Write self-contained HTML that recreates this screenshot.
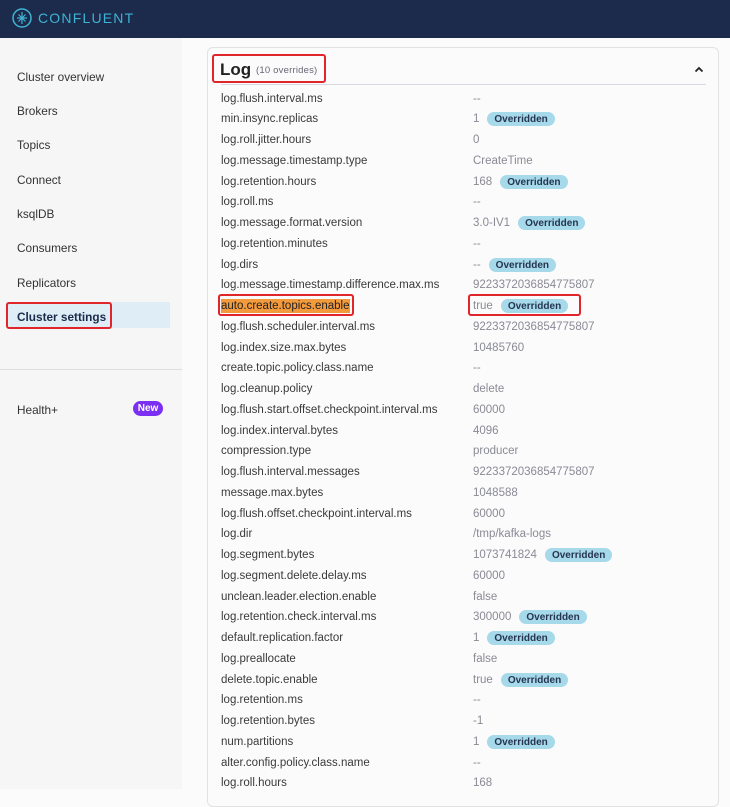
<!DOCTYPE html>
<html><head><meta charset="utf-8"><style>
*{margin:0;padding:0;box-sizing:border-box}
body{width:730px;height:789px;overflow:hidden;background:#fbfbfb;font-family:"Liberation Sans",sans-serif;position:relative}
.hdr{position:absolute;left:0;top:0;width:730px;height:38px;background:#1c2b4b}
.logo{position:absolute;left:12px;top:8px}
.brand{position:absolute;left:38px;top:10px;color:#3fb3d3;font-size:14px;letter-spacing:1.2px}
.side{position:absolute;left:0;top:38px;width:182px;height:751px;background:#f6f6f6}
.nav{position:absolute;left:17px;font-size:11.8px;color:#333}
.sel{position:absolute;left:6px;top:302px;width:164px;height:26px;background:#dfeef6}
.selbox{position:absolute;left:6px;top:302px;width:106px;height:27px;border:2px solid #e0262a;border-radius:3px}
.hr{position:absolute;left:0;top:369px;width:182px;height:1px;background:#ddd}
.new{position:absolute;left:133px;top:401px;width:30px;height:15px;border-radius:8px;background:#7b2ff2;color:#fff;font-size:10px;font-weight:bold;text-align:center;line-height:15px}
.card{position:absolute;left:207px;top:47px;width:512px;height:760px;border:1px solid #e2e2e2;border-radius:6px;background:#fbfbfb}
.title{position:absolute;left:220px;top:60px;font-size:17px;font-weight:bold;color:#222}
.ov{position:absolute;left:256px;top:65px;font-size:9.5px;color:#667;letter-spacing:.2px}
.tbox{position:absolute;left:212px;top:54px;width:114px;height:29px;border:2px solid #e0262a;border-radius:3px}
.div{position:absolute;left:221px;top:84px;width:485px;height:1px;background:#d8d8e0}
.r{position:absolute;left:221px;font-size:11.5px;color:#3a3a3a;white-space:nowrap;line-height:14px}
.v{position:absolute;left:473px;font-size:11.5px;color:#8a8a96;white-space:nowrap;height:14px;display:flex;align-items:center}
.b{display:inline-block;margin-left:8px;background:#a6d9ea;color:#26354f;font-weight:bold;font-size:10px;line-height:13px;padding:1px 7px 0;border-radius:8px}
.hl{background:#f39a3c;color:#222}
.box2{position:absolute;left:218px;top:294px;width:136px;height:22px;border:2px solid #e0262a;border-radius:3px}
.box3{position:absolute;left:468px;top:294px;width:113px;height:22px;border:2px solid #e0262a;border-radius:3px}
</style></head><body>
<div class="hdr">
<svg class="logo" width="20" height="20" viewBox="0 0 20 20"><circle cx="10" cy="10" r="9" fill="none" stroke="#3fb3d3" stroke-width="1.5"/><path d="M10 4v12M5 10h10M6.5 6.5l7 7M13.5 6.5l-7 7" stroke="#3fb3d3" stroke-width="1.2"/></svg>
<div class="brand">CONFLUENT</div>
</div>
<div class="side"></div>
<div class="nav" style="top:70px">Cluster overview</div>
<div class="nav" style="top:104px">Brokers</div>
<div class="nav" style="top:138px">Topics</div>
<div class="nav" style="top:173px">Connect</div>
<div class="nav" style="top:207px">ksqlDB</div>
<div class="nav" style="top:241px">Consumers</div>
<div class="nav" style="top:276px">Replicators</div>
<div class="sel"></div>
<div class="nav" style="top:310px;font-weight:bold;color:#1c2b4b">Cluster settings</div>
<div class="selbox"></div>
<div class="hr"></div>
<div class="nav" style="top:403px">Health+</div>
<div class="new">New</div>
<div class="card"></div>
<div class="title">Log</div><div class="ov">(10 overrides)</div><div class="tbox"></div>
<svg style="position:absolute;left:694px;top:66px" width="10" height="7" viewBox="0 0 10 7"><path d="M1.5 5.5L5 2l3.5 3.5" fill="none" stroke="#222" stroke-width="1.8"/></svg>
<div class="div"></div>
<div class="r" style="top:92px">log.flush.interval.ms</div><div class="v" style="top:92px">--</div>
<div class="r" style="top:112px">min.insync.replicas</div><div class="v" style="top:112px">1<span class="b">Overridden</span></div>
<div class="r" style="top:133px">log.roll.jitter.hours</div><div class="v" style="top:133px">0</div>
<div class="r" style="top:154px">log.message.timestamp.type</div><div class="v" style="top:154px">CreateTime</div>
<div class="r" style="top:175px">log.retention.hours</div><div class="v" style="top:175px">168<span class="b">Overridden</span></div>
<div class="r" style="top:195px">log.roll.ms</div><div class="v" style="top:195px">--</div>
<div class="r" style="top:216px">log.message.format.version</div><div class="v" style="top:216px">3.0-IV1<span class="b">Overridden</span></div>
<div class="r" style="top:237px">log.retention.minutes</div><div class="v" style="top:237px">--</div>
<div class="r" style="top:258px">log.dirs</div><div class="v" style="top:258px">--<span class="b">Overridden</span></div>
<div class="r" style="top:278px">log.message.timestamp.difference.max.ms</div><div class="v" style="top:278px">9223372036854775807</div>
<div class="r hl" style="top:299px">auto.create.topics.enable</div><div class="v" style="top:299px">true<span class="b">Overridden</span></div>
<div class="box2"></div><div class="box3"></div>
<div class="r" style="top:320px">log.flush.scheduler.interval.ms</div><div class="v" style="top:320px">9223372036854775807</div>
<div class="r" style="top:341px">log.index.size.max.bytes</div><div class="v" style="top:341px">10485760</div>
<div class="r" style="top:361px">create.topic.policy.class.name</div><div class="v" style="top:361px">--</div>
<div class="r" style="top:382px">log.cleanup.policy</div><div class="v" style="top:382px">delete</div>
<div class="r" style="top:403px">log.flush.start.offset.checkpoint.interval.ms</div><div class="v" style="top:403px">60000</div>
<div class="r" style="top:424px">log.index.interval.bytes</div><div class="v" style="top:424px">4096</div>
<div class="r" style="top:444px">compression.type</div><div class="v" style="top:444px">producer</div>
<div class="r" style="top:465px">log.flush.interval.messages</div><div class="v" style="top:465px">9223372036854775807</div>
<div class="r" style="top:486px">message.max.bytes</div><div class="v" style="top:486px">1048588</div>
<div class="r" style="top:507px">log.flush.offset.checkpoint.interval.ms</div><div class="v" style="top:507px">60000</div>
<div class="r" style="top:527px">log.dir</div><div class="v" style="top:527px">/tmp/kafka-logs</div>
<div class="r" style="top:548px">log.segment.bytes</div><div class="v" style="top:548px">1073741824<span class="b">Overridden</span></div>
<div class="r" style="top:569px">log.segment.delete.delay.ms</div><div class="v" style="top:569px">60000</div>
<div class="r" style="top:590px">unclean.leader.election.enable</div><div class="v" style="top:590px">false</div>
<div class="r" style="top:610px">log.retention.check.interval.ms</div><div class="v" style="top:610px">300000<span class="b">Overridden</span></div>
<div class="r" style="top:631px">default.replication.factor</div><div class="v" style="top:631px">1<span class="b">Overridden</span></div>
<div class="r" style="top:652px">log.preallocate</div><div class="v" style="top:652px">false</div>
<div class="r" style="top:673px">delete.topic.enable</div><div class="v" style="top:673px">true<span class="b">Overridden</span></div>
<div class="r" style="top:693px">log.retention.ms</div><div class="v" style="top:693px">--</div>
<div class="r" style="top:714px">log.retention.bytes</div><div class="v" style="top:714px">-1</div>
<div class="r" style="top:735px">num.partitions</div><div class="v" style="top:735px">1<span class="b">Overridden</span></div>
<div class="r" style="top:756px">alter.config.policy.class.name</div><div class="v" style="top:756px">--</div>
<div class="r" style="top:776px">log.roll.hours</div><div class="v" style="top:776px">168</div>
</body></html>
